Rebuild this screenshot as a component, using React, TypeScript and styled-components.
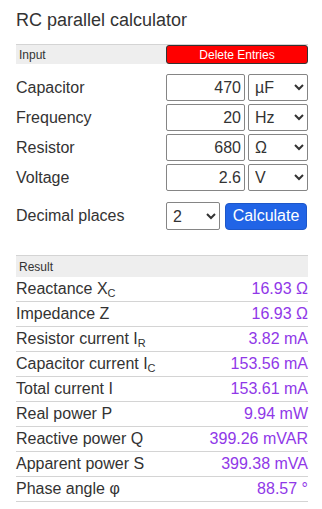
import React from 'react';
import styled, { createGlobalStyle } from 'styled-components';

const GlobalStyle = createGlobalStyle`
    body {
        margin: 0;
        background: white;
        font-family: "Liberation Sans", Arial, sans-serif;
        color: #333;
    }
`

const Page = styled.div`
    width: 292px;
    padding: 10px 0 0 16px;
`

const Title = styled.h1`
    margin: 0;
    font-size: 18px;
    font-weight: 400;
    line-height: 21px;
    color: #333;
`

const SectionHead = styled.div<{ $gap: number; $h: number }>`
    display: flex;
    align-items: center;
    justify-content: space-between;
    margin-top: ${p => p.$gap}px;
    height: ${p => p.$h}px;
    background: #eee;
    border-top: 1px solid #d4d4d4;
    font-size: 12px;
    color: #333;
    span {
        padding-left: 3px;
    }
`

const DeleteButton = styled.button`
    width: 142px;
    height: 19px;
    padding: 0;
    background: #f00;
    color: white;
    border: 1px solid #333;
    border-radius: 3px;
    font-family: inherit;
    font-size: 12px;
`

const InputList = styled.div`
    display: flex;
    flex-direction: column;
    gap: 3px;
    margin-top: 10px;
`

const InputRow = styled.div`
    display: grid;
    grid-template-columns: 147px 79px 60px;
    column-gap: 3px;
    align-items: center;
    height: 27px;
`

const Label = styled.div`
    font-size: 16px;
    color: #333;
`

const NumInput = styled.input`
    box-sizing: border-box;
    height: 27px;
    width: 100%;
    border: 1px solid #858585;
    border-radius: 2px;
    padding: 0 3px;
    text-align: right;
    font-family: inherit;
    font-size: 16px;
    color: #333;
`

const Select = styled.select<{ $w?: number }>`
    box-sizing: border-box;
    height: ${p => (p.$w ? 28 : 27)}px;
    width: ${p => (p.$w ? `${p.$w}px` : '100%')};
    border: 1px solid #858585;
    border-radius: 2px;
    padding: 0 0 0 2px;
    font-family: inherit;
    font-size: 16px;
    color: #333;
    background: white;
`

const ActionRow = styled.div`
    display: grid;
    grid-template-columns: 145px 54px 82px;
    column-gap: 5px;
    align-items: center;
    margin-top: 11px;
`

const CalcButton = styled.button`
    height: 27px;
    padding: 0;
    background: #2164e6;
    color: white;
    border: 1px solid #1d57c9;
    border-radius: 4px;
    font-family: inherit;
    font-size: 16px;
`

const ResultRow = styled.div`
    display: flex;
    align-items: center;
    justify-content: space-between;
    height: 24px;
    border-bottom: 1px solid #d4d4d4;
    font-size: 16px;
    sub {
        font-size: 11px;
        vertical-align: -3px;
        line-height: 0;
    }
`

const Value = styled.span`
    color: #9038e8;
`

const units: { [k: string]: string } = {
    Capacitor: 'µF',
    Frequency: 'Hz',
    Resistor: 'Ω',
    Voltage: 'V',
}

const inputs = [
    { name: 'Capacitor', value: '470' },
    { name: 'Frequency', value: '20' },
    { name: 'Resistor', value: '680' },
    { name: 'Voltage', value: '2.6' },
]

const results: { label: string; sub?: string; value: string }[] = [
    { label: 'Reactance X', sub: 'C', value: '16.93 Ω' },
    { label: 'Impedance Z', value: '16.93 Ω' },
    { label: 'Resistor current I', sub: 'R', value: '3.82 mA' },
    { label: 'Capacitor current I', sub: 'C', value: '153.56 mA' },
    { label: 'Total current I', value: '153.61 mA' },
    { label: 'Real power P', value: '9.94 mW' },
    { label: 'Reactive power Q', value: '399.26 mVAR' },
    { label: 'Apparent power S', value: '399.38 mVA' },
    { label: 'Phase angle φ', value: '88.57 °' },
]

const App = () => {
    return (
        <Page>
            <GlobalStyle />
            <Title>RC parallel calculator</Title>
            <SectionHead $gap={13} $h={19}>
                <span>Input</span>
                <DeleteButton>Delete Entries</DeleteButton>
            </SectionHead>
            <InputList>
                {inputs.map(item => (
                    <InputRow key={item.name}>
                        <Label>{item.name}</Label>
                        <NumInput defaultValue={item.value} />
                        <Select defaultValue={units[item.name]}>
                            <option>{units[item.name]}</option>
                        </Select>
                    </InputRow>
                ))}
            </InputList>
            <ActionRow>
                <Label>Decimal places</Label>
                <Select $w={54} defaultValue='2'>
                    <option>2</option>
                </Select>
                <CalcButton>Calculate</CalcButton>
            </ActionRow>
            <SectionHead $gap={25} $h={21}>
                <span>Result</span>
            </SectionHead>
            {results.map(r => (
                <ResultRow key={r.label}>
                    <span>{r.label}{r.sub ? <sub>{r.sub}</sub> : null}</span>
                    <Value>{r.value}</Value>
                </ResultRow>
            ))}
        </Page>
    )
}

export default App
